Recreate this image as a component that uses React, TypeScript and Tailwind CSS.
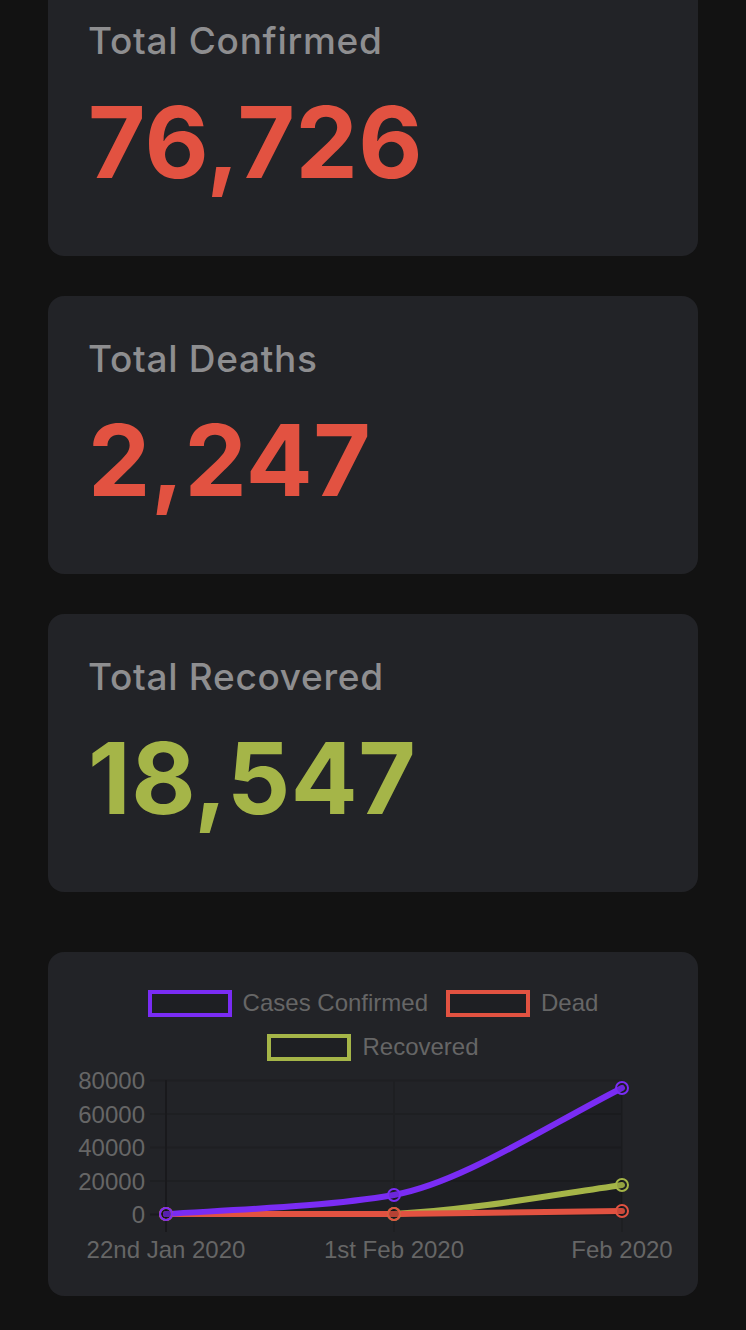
import React from 'react';

const RED = '#e25241';
const GREEN = '#a5b548';
const PURPLE = '#7a2cf4';

const stats = [
  { label: 'Total Confirmed', value: '76,726', color: 'text-[#e25241]' },
  { label: 'Total Deaths', value: '2,247', color: 'text-[#e25241]' },
  { label: 'Total Recovered', value: '18,547', color: 'text-[#a5b548]' },
];

function StatCard({ label, value, color }: { label: string; value: string; color: string }) {
  return (
    <div className="rounded-2xl bg-[#222327] px-10 pt-[41px] pb-[66px]">
      <div className="text-[37px] leading-[44px] tracking-[0.7px] font-medium text-[#8e8e90]">{label}</div>
      <div className={`mt-[31px] text-[99px] leading-[96px] tracking-[0.5px] font-bold ${color}`}>{value}</div>
    </div>
  );
}

function LegendItem({ color, label }: { color: string; label: string }) {
  return (
    <div className="flex items-center gap-[11px]">
      <div className="h-[27px] w-[84px] border-4 bg-[#1e1f23]" style={{ borderColor: color }} />
      <span>{label}</span>
    </div>
  );
}

// chart coords are offset so the top label is not clipped
const gridY = [21.5, 55, 88.5, 122, 155.5];
const yLabels = ['80000', '60000', '40000', '20000', '0'];
const gridX = [118, 346, 574];
const xLabels = ['22nd Jan 2020', '1st Feb 2020', 'Feb 2020'];

const purplePath = 'M118,155 C202,150 282,147 346,136 C412,124 492,71 574,29';
const greenPath = 'M118,155 L346,155 C422,151 492,138 574,126';
const redPath = 'M118,155 L346,155 L574,152';

function Chart() {
  return (
    <svg width={650} height={237} viewBox="0 0 650 237" className="-mt-[10px] block">
      {gridY.map((y, i) => (
        <line key={y} x1={102} x2={574} y1={y} y2={y} stroke={i === 4 ? '#1a1b1e' : '#1e1f22'} strokeWidth={2} />
      ))}
      {gridX.map((x, i) => (
        <line key={x} x1={x} x2={x} y1={21} y2={173} stroke={i === 0 ? '#19191c' : '#1e1f22'} strokeWidth={2} />
      ))}
      <path d={`${purplePath} L574,155.5 L118,155.5 Z`} fill="rgba(0,0,0,0.1)" />
      <path d={`${greenPath} L574,155.5 L118,155.5 Z`} fill="rgba(0,0,0,0.1)" />
      <path d={greenPath} fill="none" stroke={GREEN} strokeWidth={6} strokeLinecap="round" />
      <path d={redPath} fill="none" stroke={RED} strokeWidth={6} strokeLinecap="round" />
      <path d={purplePath} fill="none" stroke={PURPLE} strokeWidth={6} strokeLinecap="round" />
      {[
        [118, 155, GREEN],
        [346, 155, GREEN],
        [574, 126, GREEN],
        [118, 155, RED],
        [346, 155, RED],
        [574, 152, RED],
        [118, 155, PURPLE],
        [346, 136, PURPLE],
        [574, 29, PURPLE],
      ].map(([x, y, c], i) => (
        <circle key={i} cx={x as number} cy={y as number} r={6} fill="rgba(0,0,0,0.1)" stroke={c as string} strokeWidth={2} />
      ))}
      <g fontFamily="'Liberation Sans', Arial, sans-serif" fontSize={24} fill="#666">
        {yLabels.map((l, i) => (
          <text key={l} x={97} y={gridY[i]} textAnchor="end" dominantBaseline="central">
            {l}
          </text>
        ))}
        {xLabels.map((l, i) => (
          <text key={l} x={gridX[i]} y={190} textAnchor="middle" dominantBaseline="central">
            {l}
          </text>
        ))}
      </g>
    </svg>
  );
}

export default function App() {
  return (
    <div className="min-h-screen bg-[#121212] px-12 pb-[34px] font-['Inter',sans-serif]">
      <div className="-mt-[22px] flex flex-col gap-10">
        {stats.map((s) => (
          <StatCard key={s.label} {...s} />
        ))}
      </div>
      <div className="mt-[60px] rounded-2xl bg-[#222327] overflow-hidden">
        <div className="pt-[29px] flex flex-col items-center font-['Liberation_Sans',Arial,sans-serif] text-[24px] leading-[44px] text-[#666]">
          <div className="flex items-center gap-[18px]">
            <LegendItem color={PURPLE} label="Cases Confirmed" />
            <LegendItem color={RED} label="Dead" />
          </div>
          <LegendItem color={GREEN} label="Recovered" />
        </div>
        <Chart />
      </div>
    </div>
  );
}
